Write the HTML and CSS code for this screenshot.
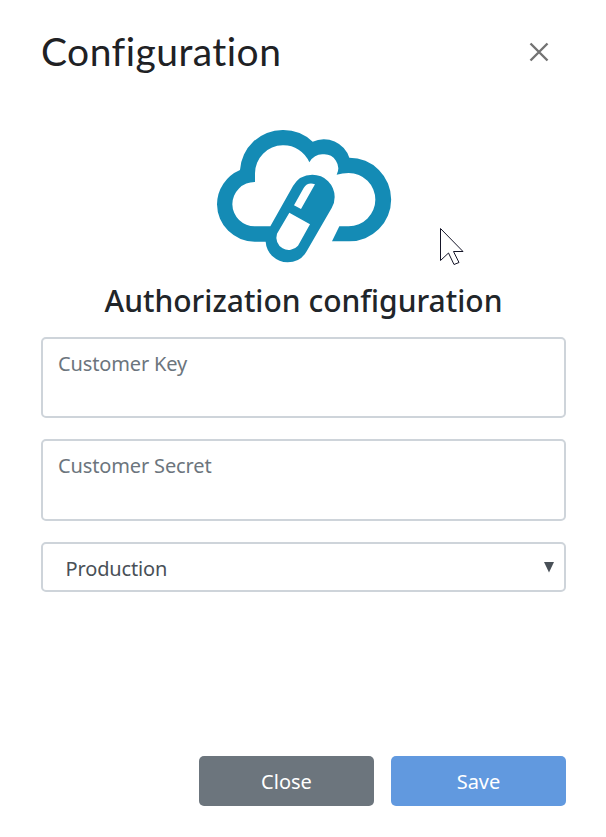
FILE: index.html
```html
<!DOCTYPE html>
<html lang="en">
<head>
<meta charset="utf-8">
<title>Configuration</title>
<link rel="stylesheet" href="styles.css">
</head>
<body>
<main class="dialog">
  <header class="header">
    <h1 class="title"><span>Configuration</span></h1>
    <button class="dismiss" aria-label="Dismiss">
      <svg width="22" height="22" viewBox="0 0 22 22"><path d="M2.5 2.5l17 17m0-17l-17 17" fill="none" stroke="#737373" stroke-width="2.4"/></svg>
    </button>
  </header>
  <svg class="logo" width="210" height="160" viewBox="0 0 630 480">
    <path fill="#148bb5" d="M197 380H165A113 113 0 0 1 51 268A113 113 0 0 1 120 165A128 128 0 0 1 248 45A128 128 0 0 1 338 80A80 80 0 0 1 448 128A125.500 125.500 0 0 1 448 379H396L418 334H446A80 80 0 0 0 446 174Q427 174 410 179A42 42 0 0 0 370 118A43 43 0 0 0 328 142A84 84 0 0 0 248 91A84 84 0 0 0 165 175V201A67 67 0 0 0 97 268A67 67 0 0 0 165 334H211L279 213A67 67 0 0 1 337 179A67 67 0 0 1 404 246Q404 264 395 279L320 409A66 66 0 0 1 263 442A66 66 0 0 1 197 380Z"/>
    <path fill="#fff" d="M268 293L330 328L294 392A37 37 0 0 1 231 356ZM282 271L303 282L345 208Q323 200 311 219Z"/>
  </svg>
  <h2 class="subtitle"><span>Authorization configuration</span></h2>
  <form class="form">
    <div class="field"><span class="key">Customer Key</span></div>
    <div class="field secret"><span class="secret-label">Customer Secret</span></div>
    <div class="select"><span class="option">Production</span><svg class="arrow" width="10" height="11" viewBox="0 0 10 11"><path d="M0 0h10L5 10.500z" fill="#495057"/></svg></div>
  </form>
  <footer class="actions">
    <button class="button close"><span>Close</span></button>
    <button class="button save"><span>Save</span></button>
  </footer>
</main>
<svg class="cursor" width="26" height="40" viewBox="0 0 26 40"><path d="M1.500 1.500V33.500L9.500 26L15 37.500L20 35.500L14.500 24.500H24Z" fill="#fff" stroke="#151528" stroke-width="1"/></svg>
</body>
</html>
```
FILE: styles.css
```css
* { box-sizing: border-box; }
body {
  margin: 0;
  background: #fff;
  color: #212529;
  font-family: "Noto Sans", sans-serif;
}
.dialog {
  width: 606px;
  height: 837px;
  padding: 24px 40px 31px 41px;
  display: flex;
  flex-direction: column;
}
.header {
  display: flex;
  justify-content: space-between;
  height: 56px;
  padding-right: 16px;
}
.title {
  margin: 0;
  font: 400 39px/54px Lato, sans-serif;
  letter-spacing: 0.45px;
  color: #202124;
}
.dismiss {
  width: 22px;
  height: 22px;
  margin-top: 17px;
  padding: 0;
  border: 0;
  background: none;
}
.dismiss svg { display: block; }
.logo {
  display: block;
  margin: 35px auto 0 159px;
}
.subtitle {
  margin: 6px 0 0;
  height: 40px;
  font-size: 30px;
  font-weight: 500;
  line-height: 40px;
  text-align: center;
  white-space: nowrap;
}
.form {
  display: flex;
  flex-direction: column;
  margin-top: 16px;
}
.field, .select {
  border: 2px solid #ced4da;
  border-radius: 5px;
  font-size: 20px;
  letter-spacing: -0.14px;
}
.field {
  height: 81px;
  margin-bottom: 21px;
  padding: 10px 15px;
  line-height: 30px;
  color: #6c757d;
}
.secret { height: 82px; }
.select {
  display: flex;
  align-items: center;
  justify-content: space-between;
  height: 50px;
  padding: 2px 10px 0 22.500px;
  color: #495057;
}
.arrow { margin-bottom: 1px; }
.actions {
  display: flex;
  justify-content: flex-end;
  gap: 17px;
  margin-top: auto;
}
.button {
  width: 175px;
  height: 50px;
  padding: 2px 0 0;
  border: 0;
  border-radius: 5px;
  color: #fff;
  font: 20px/30px "Noto Sans", sans-serif;
}
.close { background: #6c757d; }
.save { background: #6199df; }
.cursor {
  position: absolute;
  left: 439px;
  top: 227px;
}
```
